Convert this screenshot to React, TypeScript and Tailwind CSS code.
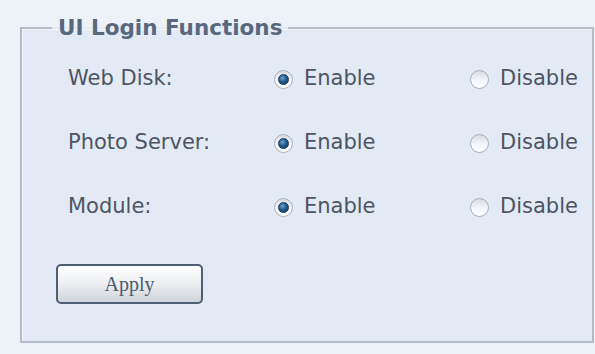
import React from 'react';

const rows = ['Web Disk:', 'Photo Server:', 'Module:'];

const Radio: React.FC<{ checked: boolean }> = ({ checked }) => (
  <span className="relative inline-flex h-[19px] w-[19px] shrink-0 items-center justify-center rounded-full border border-[#a7afba] bg-gradient-to-b from-[#d6dbe2] via-[#f2f4f7] to-white">
    {checked && (
      <span className="h-[11px] w-[11px] rounded-full border border-[#1c3a5c] bg-[radial-gradient(circle_at_40%_35%,#6fa3d4_0%,#23598e_45%,#0f3358_100%)]" />
    )}
  </span>
);

export default function App() {
  return (
    <div className="h-[354px] w-[595px] overflow-hidden bg-[#edf1f8] pl-[20px] pr-[1px] pt-[14px] font-['DejaVu_Sans',sans-serif]">
      <fieldset className="h-[329px] border-2 border-[#b3bcc9] bg-[#e3eaf5] shadow-[inset_1px_1px_0_#f4f7fb]">
        <legend className="ml-[30px] px-[6px] text-[21.5px] leading-[28px] font-bold text-[#57687f]">
          UI Login Functions
        </legend>
        <div className="grid grid-cols-[206px_196px_1fr] pl-[46px] pt-[5px]">
          {rows.map((label) => (
            <React.Fragment key={label}>
              <div className="flex h-[64px] items-center text-[21px] text-[#4d5563]">{label}</div>
              <div className="flex h-[64px] items-center gap-[11px] text-[21px] text-[#4d5563]">
                <Radio checked />
                Enable
              </div>
              <div className="flex h-[64px] items-center gap-[11px] text-[21px] text-[#4d5563]">
                <Radio checked={false} />
                Disable
              </div>
            </React.Fragment>
          ))}
        </div>
        <div className="pl-[34px] pt-[25px]">
          <button
            type="button"
            className="flex h-[40px] w-[147px] items-center justify-center rounded-[5px] border-2 border-[#4f5e72] bg-gradient-to-b from-white via-[#eceef1] to-[#cfd4da] font-['Liberation_Serif',serif] text-[20px] text-[#4b5a6e]"
          >
            Apply
          </button>
        </div>
      </fieldset>
    </div>
  );
}
